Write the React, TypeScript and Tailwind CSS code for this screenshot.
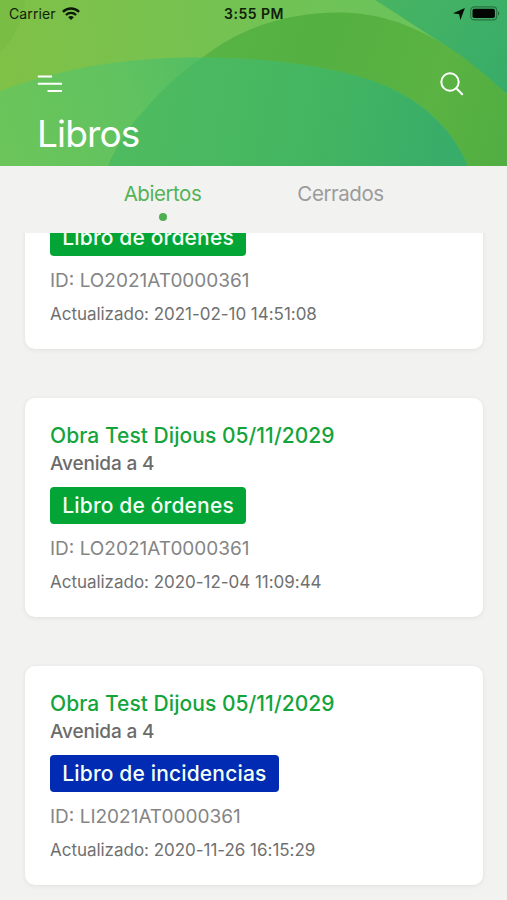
import React from "react";

type Book = {
  title: string;
  address: string;
  kind: string;
  color: string;
  id: string;
  updated: string;
};

const lastSeen = { kind: "Libro de órdenes", color: "bg-[#03a636]", id: "LO2021AT0000361", updated: "2021-02-10 14:51:08" };

const books: Book[] = [
  { title: "Obra Test Dijous 05/11/2029", address: "Avenida a 4", kind: "Libro de órdenes", color: "bg-[#03a636]", id: "LO2021AT0000361", updated: "2020-12-04 11:09:44" },
  { title: "Obra Test Dijous 05/11/2029", address: "Avenida a 4", kind: "Libro de incidencias", color: "bg-[#002bb2]", id: "LI2021AT0000361", updated: "2020-11-26 16:15:29" },
];

function HeaderArt() {
  return (
    <svg className="absolute inset-0" width="507" height="166" viewBox="0 0 507 166" preserveAspectRatio="none">
      <defs>
        <linearGradient id="base" gradientUnits="userSpaceOnUse" x1="0" y1="60" x2="390" y2="20">
          <stop offset="0" stopColor="#80c147" />
          <stop offset="1" stopColor="#6cc35a" />
        </linearGradient>
        <linearGradient id="corner" gradientUnits="userSpaceOnUse" x1="380" y1="0" x2="507" y2="90">
          <stop offset="0" stopColor="#48b462" />
          <stop offset="1" stopColor="#37ac69" />
        </linearGradient>
        <linearGradient id="hill" gradientUnits="userSpaceOnUse" x1="200" y1="40" x2="507" y2="130">
          <stop offset="0" stopColor="#58b444" />
          <stop offset="0.35" stopColor="#54b041" />
          <stop offset="0.75" stopColor="#5ab342" />
          <stop offset="1" stopColor="#52ae42" />
        </linearGradient>
        <linearGradient id="front" gradientUnits="userSpaceOnUse" x1="0" y1="140" x2="220" y2="60">
          <stop offset="0" stopColor="#6bc55a" />
          <stop offset="0.6" stopColor="#60c260" />
          <stop offset="1" stopColor="#50bd64" />
        </linearGradient>
        <linearGradient id="overlap" gradientUnits="userSpaceOnUse" x1="130" y1="90" x2="450" y2="150">
          <stop offset="0" stopColor="#4fbb60" />
          <stop offset="0.6" stopColor="#43b561" />
          <stop offset="1" stopColor="#38ac69" />
        </linearGradient>
        <clipPath id="hillClip">
          <path d="M108 166C116 146 130 125 147 107C166 85 184 70 203 57C240 28 287 12.500 338 12.500C376 12.500 407 23 440 42C463 55 487 76 507 94V166Z" />
        </clipPath>
      </defs>
      <rect width="507" height="166" fill="url(#base)" />
      <path d="M0 0H25C23 20 14 40 0 52Z" fill="#76ba45" opacity="0.6" />
      <path d="M375 0C394 12 414 25 440 42L507 94V0Z" fill="url(#corner)" />
      <path d="M108 166C116 146 130 125 147 107C166 85 184 70 203 57C240 28 287 12.500 338 12.500C376 12.500 407 23 440 42C463 55 487 76 507 94V166Z" fill="url(#hill)" />
      <path d="M0 91C58 69 124 57.500 195 57.500C270 57.500 334 67 378 83C424 101 452 129 468 166H0Z" fill="url(#front)" />
      <path clipPath="url(#hillClip)" d="M0 91C58 69 124 57.500 195 57.500C270 57.500 334 67 378 83C424 101 452 129 468 166H0Z" fill="url(#overlap)" />
    </svg>
  );
}

function StatusBar() {
  return (
    <div className="relative grid h-[27px] grid-cols-3 items-center pl-[9px] pr-[7px] text-[14px] text-[#10200a]">
      <div className="flex items-center gap-[6px]">
        <span className="tracking-[0.1px]">Carrier</span>
        <svg width="18" height="14" viewBox="0 0 18 14" fill="none" stroke="#0b1707" strokeWidth="2.300">
          <path d="M0.900 4.800C5.500 0.400 12.500 0.400 17.100 4.800" />
          <path d="M3.900 8C6.800 5.200 11.200 5.200 14.100 8" />
          <path d="M6.200 10.200C7.800 8.700 10.200 8.700 11.800 10.200L9 13Z" fill="#0b1707" stroke="none" />
        </svg>
      </div>
      <span className="pr-px text-center font-semibold tracking-[0.500px] whitespace-nowrap">3:55 PM</span>
      <div className="flex items-center justify-end gap-[5px]">
        <svg width="12" height="12" viewBox="0 0 12 12" fill="#050d03">
          <path d="M11.900 0.100L7.400 12L6.200 6.300L0 5.200Z" />
        </svg>
        <svg width="30" height="15" viewBox="0 0 30 15">
          <rect x="0.700" y="0.900" width="26" height="13" rx="3.500" fill="none" stroke="#16351e" strokeOpacity="0.5" strokeWidth="1.100" />
          <rect x="2.500" y="2.700" width="22.400" height="9.400" rx="1.800" fill="#020602" />
          <path d="M28 5.200C29.600 5.800 29.600 9 28 9.600Z" fill="#16351e" fillOpacity="0.6" />
        </svg>
      </div>
    </div>
  );
}

function Header() {
  return (
    <header className="relative h-[166px] shrink-0 overflow-hidden">
      <HeaderArt />
      <StatusBar />
      <div className="relative mt-[45px] flex items-start justify-between pl-[37px] pr-[43px]">
        <svg width="26" height="20" viewBox="0 0 26 20" stroke="#fff" strokeWidth="2" strokeLinecap="round" className="mt-[2px]">
          <path d="M1.600 2.500H14.200M1.600 9.800H24.200M11.300 17H24.200" />
        </svg>
        <svg width="24" height="24" viewBox="0 0 24 24" fill="none" stroke="#fff" strokeWidth="2" strokeLinecap="round">
          <circle cx="10" cy="10" r="8.700" />
          <path d="M16.300 16.300L22.200 22.200" />
        </svg>
      </div>
      <h1 className="relative mt-[15px] pl-[37px] text-[37px] leading-[46px] tracking-[-0.850px] text-white">Libros</h1>
    </header>
  );
}

function Tabs() {
  return (
    <nav className="flex h-[67px] shrink-0 justify-center pr-[4px] text-[20.500px] leading-7">
      <div className="flex w-[178px] flex-col items-center pt-[14px] text-[#54b257]">
        <span className="tracking-[-0.450px]">Abiertos</span>
        <span className="mt-[5px] size-2 rounded-full bg-[#50ae52]" />
      </div>
      <div className="flex w-[178px] flex-col items-center pt-[14px] text-[#9b9b9b]">
        <span className="tracking-[-0.450px]">Cerrados</span>
      </div>
    </nav>
  );
}

const cardBase = "flex shrink-0 flex-col items-start bg-white px-[25px] whitespace-nowrap shadow-[0_1px_5px_rgba(0,0,0,0.08)]";

function Details({ kind, color, id, updated }: Omit<Book, "title" | "address">) {
  return (
    <>
      <span className={`h-[37px] rounded-[4px] px-[12.250px] text-[21px] leading-[37px] font-medium tracking-[0.160px] text-[#f4fff6] ${color}`}>{kind}</span>
      <p className="mt-[13px] text-[19px] leading-6 text-[#858585]">ID: {id}</p>
      <p className="mt-[9px] text-[17px] leading-6 tracking-[-0.030px] text-[#707070]">Actualizado: {updated}</p>
    </>
  );
}

function Card({ title, address, ...details }: Book) {
  return (
    <article className={`${cardBase} h-[219px] rounded-[10px] pt-6`}>
      <h2 className="text-[21px] leading-7 font-medium tracking-[0.050px] text-[#14a43c]">{title}</h2>
      <p className="mb-[9px] text-[19px] leading-7 font-medium tracking-[-0.160px] text-[#6b6b6b]">{address}</p>
      <Details {...details} />
    </article>
  );
}

export default function App() {
  return (
    <div className="flex h-[900px] w-[507px] flex-col overflow-hidden bg-[#f2f2f1] font-['Inter','Liberation_Sans',sans-serif]">
      <Header />
      <Tabs />
      <main className="min-h-0 flex-1 overflow-hidden">
        <div className="-mt-[14px] flex flex-col gap-[49px] pr-[24px] pl-[25px]">
          <article className={`${cardBase} h-[130px] rounded-b-[10px]`}>
            <Details {...lastSeen} />
          </article>
          {books.map((book) => (
            <Card key={book.updated} {...book} />
          ))}
        </div>
      </main>
    </div>
  );
}
